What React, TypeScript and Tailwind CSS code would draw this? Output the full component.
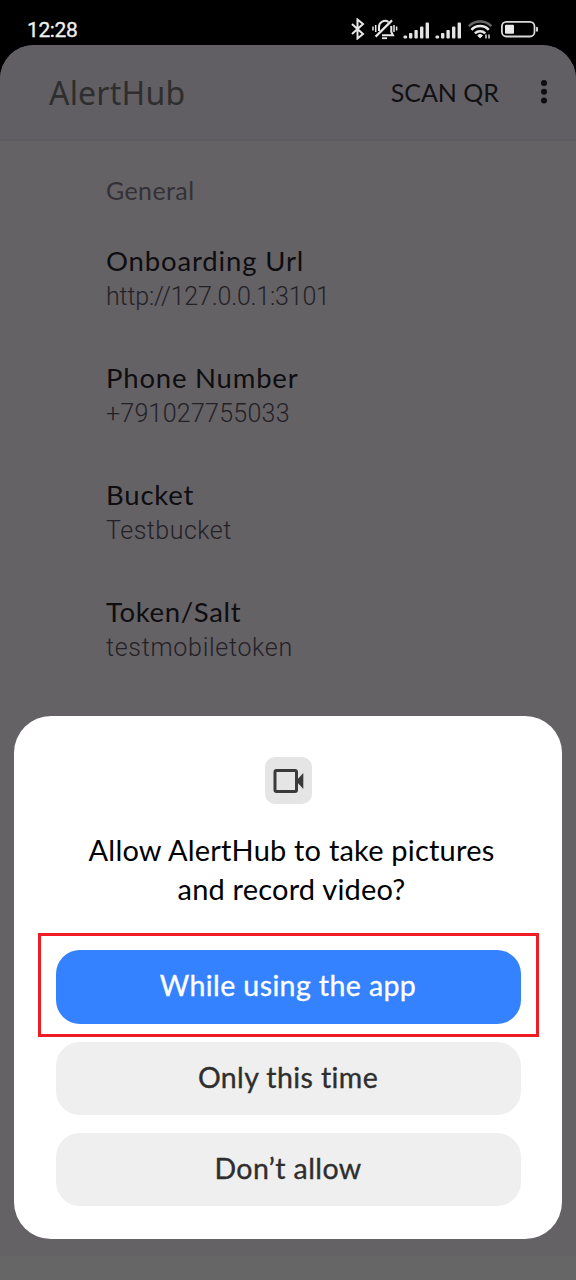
import React from 'react'

interface Setting {
    label: string
    value: string
    labelClass: string
    valueClass: string
}

const settings: Setting[] = [
    {
        label: 'Onboarding Url',
        value: 'http://127.0.0.1:3101',
        labelClass: 'tracking-[0.85px]',
        valueClass: 'tracking-[-0.2px]',
    },
    {
        label: 'Phone Number',
        value: '+791027755033',
        labelClass: 'tracking-[0.8px]',
        valueClass: 'tracking-[0.25px]',
    },
    {
        label: 'Bucket',
        value: 'Testbucket',
        labelClass: 'tracking-[0.8px]',
        valueClass: 'tracking-[0.5px]',
    },
    {
        label: 'Token/Salt',
        value: 'testmobiletoken',
        labelClass: 'tracking-[0.65px]',
        valueClass: 'tracking-[0.7px]',
    },
]

const SignalIcon = () => (
    <svg width="27" height="18" viewBox="0 0 27 18" fill="#e4e4e4">
        <rect x="0.5" y="13.5" width="3.6" height="3" rx="1.2" />
        <rect x="6" y="11" width="3.4" height="5.5" rx="1" />
        <rect x="11.4" y="8" width="3.4" height="8.5" rx="1" />
        <rect x="17" y="4.5" width="3.4" height="12" rx="1" />
        <rect x="22.6" y="0.5" width="3.4" height="16" rx="1" />
    </svg>
)

const StatusBar = () => (
    <div className="flex h-[45px] items-start bg-black pt-[18px] text-[#f0f0f0]">
        <span className="ml-[27px] w-[324px] text-[21px] leading-6 font-['Roboto',sans-serif] tracking-[-0.4px] [-webkit-text-stroke:0.3px]">
            12:28
        </span>
        {/* bluetooth */}
        <svg width="14" height="22" viewBox="0 0 14 22" fill="none" stroke="#e8e8e8" strokeWidth="2">
            <path d="M1 6l11 10-5.5 4.5v-19l5.5 4.5L1 16" />
        </svg>
        {/* muted bell with vibration marks */}
        <svg className="ml-[7px]" width="26" height="22" viewBox="0 0 26 22" fill="none" stroke="#e8e8e8" strokeWidth="2">
            <path d="M7 13V9a6 6 0 0 1 9.5-5M19.3 8v6l1.7 3.3H10" />
            <path d="M3.6 18.6L20 2.4" strokeWidth="2.2" />
            <path d="M10 20.2h5" strokeWidth="1.8" />
            <path d="M1 8.5v4M3.7 7v7M24.6 8.5v4M22 7v7" strokeWidth="1.5" />
        </svg>
        <div className="ml-[5px] flex gap-[5px] pt-[4px]">
            <SignalIcon />
            <SignalIcon />
        </div>
        {/* wifi */}
        <svg className="ml-[6px] mt-[2px]" width="26" height="20" viewBox="0 0 26 20" fill="none" strokeWidth="2.5">
            <path d="M0.8 6.2a16 16 0 0 1 22.6 0" stroke="#666" />
            <path d="M3.4 9.8a12 12 0 0 1 17.4 0" stroke="#e8e8e8" />
            <path d="M6.9 13.3a7.5 7.5 0 0 1 10.4 0" stroke="#e8e8e8" />
            <path d="M9.7 15.5a3.5 3.5 0 0 1 4.8 0l-2.4 2.4z" fill="#e8e8e8" strokeWidth="1" stroke="#e8e8e8" />
            <path d="M18 18.5v-4M21 14.5v4" stroke="#e8e8e8" strokeWidth="1.4" />
        </svg>
        {/* battery */}
        <svg className="ml-[7px] mt-[3px]" width="38" height="17" viewBox="0 0 38 17">
            <rect x="0.9" y="0.9" width="32.6" height="14.6" rx="4.5" fill="none" stroke="#d8d8d8" strokeWidth="1.8" />
            <rect x="4" y="3.7" width="9" height="9" rx="1" fill="#e8e8e8" />
            <rect x="35" y="5.7" width="2" height="5" rx="1" fill="#d0d0d0" />
        </svg>
    </div>
)

const AppBar = () => (
    <header className="flex h-[96px] items-center border-b-2 border-[#5f5c61] bg-[#625f64]">
        <h1 className="ml-[49px] flex-1 pt-px font-['Noto_Sans',sans-serif] text-[32px] leading-[40px] tracking-[0.2px] text-[#2e2e2e]">
            AlertHub
        </h1>
        <span className="mr-[41px] text-[25px] leading-[35px] text-[#111013]">SCAN QR</span>
        <svg className="mr-[28px]" width="8" height="26" viewBox="0 0 8 26" fill="#0e0d10">
            <circle cx="4" cy="4" r="3" />
            <circle cx="4" cy="12.8" r="3" />
            <circle cx="4" cy="21.5" r="3" />
        </svg>
    </header>
)

const PermissionDialog = () => (
    <div className="mx-[14px] flex h-[523px] flex-col items-center rounded-[37px] bg-white px-[41px] pt-[41px]">
        <div className="flex h-[47px] w-[47px] shrink-0 items-center justify-center rounded-[10px] bg-[#e5e5e5]">
            <svg width="31" height="24" viewBox="0 0 31 24">
                <rect x="2" y="1.5" width="21.5" height="21" rx="1.5" fill="none" stroke="#3a3a3a" strokeWidth="3" />
                <path d="M23 12l7.3-8v16z" fill="#3a3a3a" />
            </svg>
        </div>
        <p className="mt-[26px] ml-[7px] text-center text-[29px] leading-[39px] tracking-[0.2px] whitespace-nowrap text-black">
            Allow AlertHub to take pictures
            <br />
            and record video?
        </p>
        <div className="mt-[42px] flex w-[465px] flex-col gap-[18px] text-[28.5px] leading-[35px] tracking-[0.4px] text-[#2e2e2e] [-webkit-text-stroke:0.35px]">
            <button className="relative h-[73.5px] rounded-[24px] bg-[#3482ff] pb-[2px] text-white">
                While using the app
                <span className="absolute -top-[17px] -right-[18px] h-[104px] w-[501px] border-3 border-[#f01c24]" />
            </button>
            <button className="h-[73px] rounded-[24px] bg-[#efefef] pb-[2px]">Only this time</button>
            <button className="h-[73px] rounded-[24px] bg-[#efefef] pb-[2px]">Don’t allow</button>
        </div>
    </div>
)

const App: React.FC = () => {
    return (
        <div className="h-[1280px] w-[576px] overflow-hidden bg-black font-['Lato',sans-serif] [font-variant-ligatures:none]">
            <StatusBar />
            <div className="flex h-[1235px] flex-col overflow-hidden rounded-t-[34px] bg-[#656266]">
                <AppBar />
                <main className="h-[575px] shrink-0 pt-[32px] pl-[106px]">
                    <h2 className="mb-[35px] text-[25px] leading-[35px] tracking-[0.4px] text-[#333136]">General</h2>
                    {settings.map((s) => (
                        <div key={s.label} className="mb-[45px]">
                            <div className={`text-[27.5px] leading-[36px] text-[#0e0d10] ${s.labelClass}`}>{s.label}</div>
                            <div
                                className={`font-['Roboto',sans-serif] text-[25px] leading-[36px] font-light text-[#232126] ${s.valueClass}`}
                            >
                                {s.value}
                            </div>
                        </div>
                    ))}
                </main>
                <PermissionDialog />
                <div className="mt-auto h-[24px] bg-[#666666]" />
            </div>
        </div>
    )
}

export default App
